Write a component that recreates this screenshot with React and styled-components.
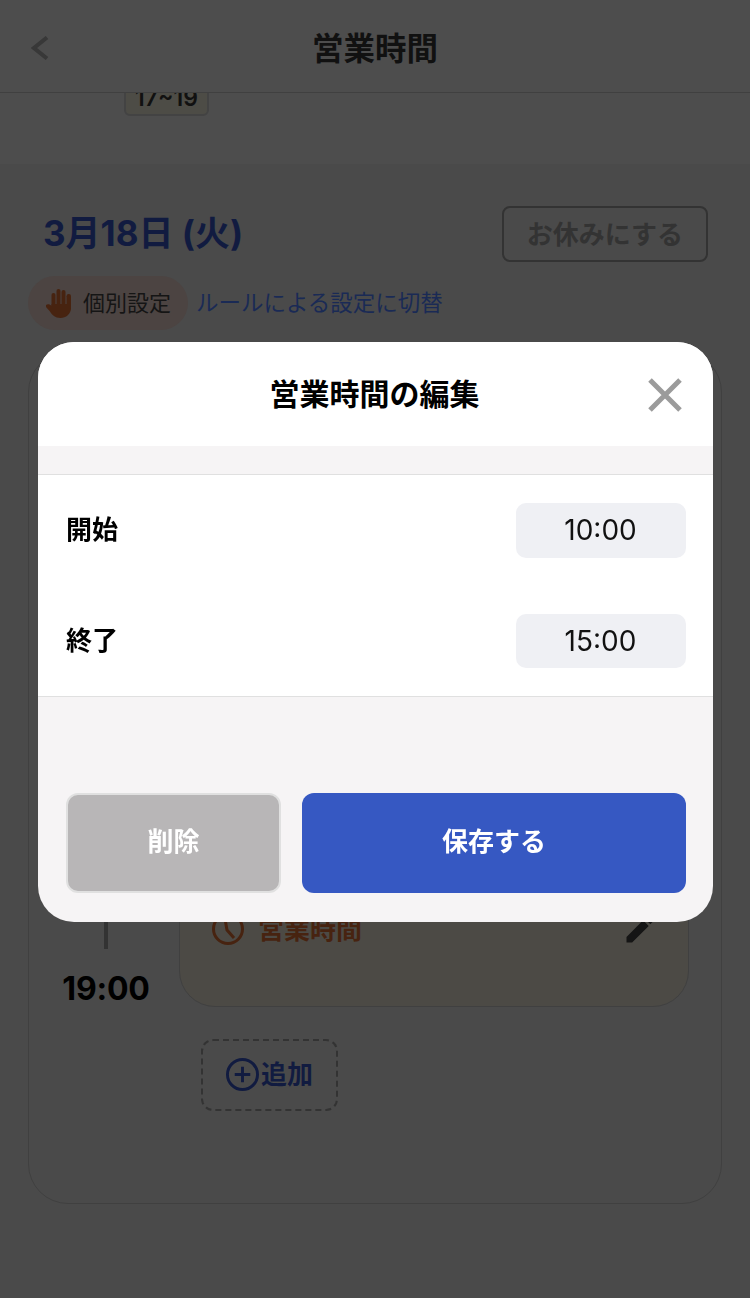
import styled, { createGlobalStyle } from "styled-components";
import { MdEdit } from "react-icons/md";

const fontStack = `Inter, "Noto Sans CJK JP", sans-serif`;

function App() {
  return (
    <>
      <GlobalStyle />
      <Page>
        <Header>
          <BackIcon viewBox="0 0 18 24" fill="none">
            <path d="M16 1.5 L3 12 L16 22.5" stroke="#383838" strokeWidth="4" />
          </BackIcon>
          <HeaderTitle>営業時間</HeaderTitle>
        </Header>
        <WeekStrip>
          <SlotChip>17~19</SlotChip>
        </WeekStrip>
        <Day>
          <DateRow>
            <DateTitle>3月18日 (火)</DateTitle>
            <HolidayButton>お休みにする</HolidayButton>
          </DateRow>
          <ModeRow>
            <ModePill>
              <svg width="28" height="30" viewBox="0 0 28 30" fill="#472310">
                <rect x="6.5" y="5" width="4" height="16" rx="2" />
                <rect x="11.5" y="1" width="4" height="18" rx="2" />
                <rect x="16.5" y="2" width="4" height="18" rx="2" />
                <rect x="21.5" y="6" width="4.5" height="16" rx="2.2" />
                <path d="M1 17 C2.5 15.5 5 16 6.5 18 L6.5 16 H26 V20 C26 26 21 30 15.5 30 C10 30 7 27 5 23.5 L1 19 Z" />
              </svg>
              <PillLabel>個別設定</PillLabel>
            </ModePill>
            <ModeLink>ルールによる設定に切替</ModeLink>
          </ModeRow>
          <ScheduleCard>
            <ScheduleRow>
              <TimeColumn>
                <TimeLine />
                <TimeLabel>19:00</TimeLabel>
              </TimeColumn>
              <SlotCard>
                <SlotRow>
                  <SlotName>
                    <svg width="32" height="32" viewBox="0 0 32 32" fill="none">
                      <circle cx="16" cy="16" r="14.5" stroke="#472310" strokeWidth="3" />
                      <path d="M13 6 L15 17 L22 25" stroke="#472310" strokeWidth="3" />
                    </svg>
                    <SlotLabel>営業時間</SlotLabel>
                  </SlotName>
                  <MdEdit size={36} color="#151515" />
                </SlotRow>
              </SlotCard>
            </ScheduleRow>
            <AddButton>
              <svg width="33" height="33" viewBox="0 0 34 34" fill="none">
                <circle cx="17" cy="17" r="15.5" stroke="#111b40" strokeWidth="3" />
                <path d="M17 9 V25 M9 17 H25" stroke="#111b40" strokeWidth="3" />
              </svg>
              <AddLabel>追加</AddLabel>
            </AddButton>
          </ScheduleCard>
        </Day>
      </Page>
      <Overlay>
        <Modal>
          <ModalHeader>
            <ModalTitle>営業時間の編集</ModalTitle>
            <CloseIcon viewBox="0 0 34 34" fill="none">
              <path d="M2 2 L32 32 M32 2 L2 32" stroke="#9b9b9b" strokeWidth="5" />
            </CloseIcon>
          </ModalHeader>
          <Fields>
            <FieldRow>
              <FieldLabel>開始</FieldLabel>
              <TimeValue>10:00</TimeValue>
            </FieldRow>
            <FieldRow>
              <FieldLabel>終了</FieldLabel>
              <TimeValue>15:00</TimeValue>
            </FieldRow>
          </Fields>
          <Footer>
            <DeleteButton>削除</DeleteButton>
            <SaveButton>保存する</SaveButton>
          </Footer>
        </Modal>
      </Overlay>
    </>
  );
}

export default App;

const GlobalStyle = createGlobalStyle`
  html, body {
    margin: 0;
    height: 1298px;
    overflow: hidden;
    background: #4a4a4a;
    font-family: ${fontStack};
  }
  * {
    box-sizing: border-box;
  }
`;

const Page = styled.div`
  width: 750px;
  height: 1298px;
  display: flex;
  flex-direction: column;
  overflow: hidden;
`;

const Header = styled.header`
  position: relative;
  z-index: 1;
  height: 93px;
  flex-shrink: 0;
  display: flex;
  align-items: center;
  justify-content: center;
  background: #4d4d4d;
  border-bottom: 1px solid #404040;
`;

const BackIcon = styled.svg`
  position: absolute;
  left: 31px;
  top: 36px;
  width: 18px;
  height: 24px;
`;

const HeaderTitle = styled.h1`
  margin: 0;
  font-size: 31.5px;
  font-weight: 700;
  color: #111;
`;

const WeekStrip = styled.div`
  height: 71px;
  flex-shrink: 0;
  padding-left: 124px;
  background: #4d4d4d;
`;

const SlotChip = styled.div`
  width: 85px;
  height: 34px;
  margin-top: -11px;
  padding-bottom: 2px;
  display: flex;
  align-items: center;
  justify-content: center;
  font-size: 23px;
  font-weight: 600;
  color: #111;
  background: #4d4c46;
  border: 2px solid #434343;
  border-radius: 6px;
`;

const Day = styled.section`
  padding: 42px 28px 0;
`;

const DateRow = styled.div`
  height: 56px;
  display: flex;
  align-items: center;
  justify-content: space-between;
  margin: 0 0 14px 15px;
`;

const DateTitle = styled.h2`
  margin: 0;
  padding-bottom: 2px;
  font-size: 35px;
  line-height: 44px;
  font-weight: 700;
  color: #111b40;
`;

const HolidayButton = styled.div`
  width: 206px;
  height: 56px;
  margin-right: 14px;
  padding-bottom: 4px;
  display: flex;
  align-items: center;
  justify-content: center;
  font-size: 26px;
  font-weight: 700;
  color: #333;
  border: 2px solid #333;
  border-radius: 8px;
`;

const ModeRow = styled.div`
  display: flex;
  align-items: center;
  gap: 8px;
`;

const ModePill = styled.div`
  width: 160px;
  height: 54px;
  display: flex;
  align-items: center;
  justify-content: center;
  gap: 10px;
  background: #4c4442;
  border-radius: 27px;
`;

const PillLabel = styled.span`
  padding-bottom: 4px;
  font-size: 22px;
  color: #151515;
`;

const ModeLink = styled.span`
  padding-bottom: 4px;
  font-size: 22.5px;
  color: #1a2a55;
`;

const ScheduleCard = styled.div`
  height: 852px;
  margin-top: 22px;
  padding-top: 280px;
  border: 1px solid #404040;
  border-radius: 40px;
`;

const ScheduleRow = styled.div`
  display: flex;
  align-items: stretch;
  height: 374px;
`;

const TimeColumn = styled.div`
  width: 150px;
  padding-left: 4px;
  display: flex;
  flex-direction: column;
  align-items: center;
`;

const TimeLine = styled.div`
  flex: 1;
  width: 4px;
  background: #333;
`;

const TimeLabel = styled.div`
  margin-top: 22px;
  height: 36px;
  line-height: 36px;
  font-size: 32px;
  font-weight: 700;
  letter-spacing: -0.2px;
  color: #000;
`;

const SlotCard = styled.div`
  width: 510px;
  display: flex;
  flex-direction: column;
  justify-content: flex-end;
  padding: 0 30px 59px 32px;
  background: #4c4a45;
  border: 1px solid #404040;
  border-radius: 36px;
`;

const SlotRow = styled.div`
  height: 36px;
  display: flex;
  align-items: center;
  justify-content: space-between;
`;

const SlotName = styled.div`
  display: flex;
  align-items: center;
  gap: 14px;
`;

const SlotLabel = styled.span`
  padding-bottom: 4px;
  font-size: 26px;
  font-weight: 700;
  color: #472310;
`;

const AddButton = styled.div`
  width: 137px;
  height: 72px;
  margin: 32px 0 0 172px;
  padding-bottom: 2px;
  display: flex;
  align-items: center;
  justify-content: center;
  gap: 2px;
  border: 2px dashed #333;
  border-radius: 12px;
`;

const AddLabel = styled.span`
  padding-bottom: 4px;
  font-size: 26px;
  font-weight: 700;
  color: #111b40;
`;

const Overlay = styled.div`
  position: fixed;
  inset: 0;
  z-index: 2;
  padding: 342px 0 0 38px;
`;

const Modal = styled.div`
  width: 675px;
  height: 580px;
  display: flex;
  flex-direction: column;
  overflow: hidden;
  background: #f6f4f5;
  border-radius: 36px;
`;

const ModalHeader = styled.div`
  position: relative;
  height: 104px;
  display: flex;
  align-items: center;
  justify-content: center;
  background: #fff;
`;

const ModalTitle = styled.h2`
  margin: 0;
  padding: 0 2px 4px 0;
  font-size: 30px;
  font-weight: 700;
  color: #000;
`;

const CloseIcon = styled.svg`
  position: absolute;
  right: 31px;
  top: 36px;
  width: 34px;
  height: 34px;
`;

const Fields = styled.div`
  margin-top: 28px;
  padding: 28px 27px 28px 28px;
  display: flex;
  flex-direction: column;
  gap: 56px;
  background: #fff;
  border-top: 1px solid #e0e0e0;
  border-bottom: 1px solid #e0e0e0;
`;

const FieldRow = styled.div`
  display: flex;
  align-items: center;
  justify-content: space-between;
`;

const FieldLabel = styled.span`
  padding-bottom: 5px;
  font-size: 26px;
  font-weight: 700;
  color: #000;
`;

const TimeValue = styled.div`
  width: 170px;
  height: 54.5px;
  padding-right: 1px;
  display: flex;
  align-items: center;
  justify-content: center;
  font-size: 28px;
  color: #111;
  background: #eff0f4;
  border-radius: 10px;
`;

const Footer = styled.div`
  padding: 96px 27px 0 28px;
  display: flex;
  gap: 21px;
`;

const FooterButton = styled.div`
  height: 100px;
  padding-bottom: 8px;
  display: flex;
  align-items: center;
  justify-content: center;
  font-size: 26px;
  font-weight: 700;
  color: #fff;
  border-radius: 12px;
`;

const DeleteButton = styled(FooterButton)`
  width: 215px;
  background: #b8b6b7;
  border: 2px solid #e0e0e0;
`;

const SaveButton = styled(FooterButton)`
  width: 384px;
  background: #3658c2;
`;
